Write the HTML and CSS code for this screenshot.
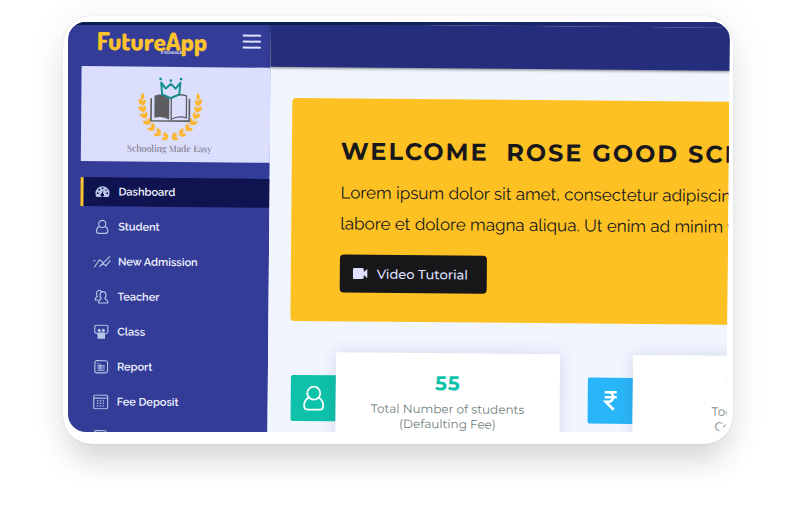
FILE: index.html
```html
<!DOCTYPE html>
<html lang="en">
<head>
<meta charset="utf-8">
<title>FutureApp</title>
<link rel="stylesheet" href="styles.css">
</head>
<body>
<div class="frame">
  <div class="screen">
    <div class="app">
      <aside class="sidebar">
        <div class="brand">
          <a class="brand-name" href="#">FutureApp<small>E SCHOOLS</small></a>
          <button class="menu" type="button" aria-label="Toggle menu"><i></i><i></i><i></i></button>
        </div>
        <div class="school">
          <svg class="emblem" viewBox="0 0 200 196" aria-hidden="true">
            <defs>
              <path id="leaf" d="M0 0C-7-5-7-14 0-21C7-14 7-5 0 0Z"/>
              <g id="branch" fill="#fdb62f">
                <path d="M13 66Q12 160 92 186" fill="none" stroke="#fdb62f" stroke-width="2"/>
                <use href="#leaf" transform="translate(16 72)"/>
                <use href="#leaf" transform="translate(14 88) rotate(-24)"/>
                <use href="#leaf" transform="translate(15 90) rotate(26)"/>
                <use href="#leaf" transform="translate(17 108) rotate(-38)"/>
                <use href="#leaf" transform="translate(18 110) rotate(18)"/>
                <use href="#leaf" transform="translate(24 128) rotate(-50)"/>
                <use href="#leaf" transform="translate(25 129) rotate(8)"/>
                <use href="#leaf" transform="translate(35 147) rotate(-62)"/>
                <use href="#leaf" transform="translate(37 147) rotate(-4)"/>
                <use href="#leaf" transform="translate(51 164) rotate(-76)"/>
                <use href="#leaf" transform="translate(52 162) rotate(-20)"/>
                <use href="#leaf" transform="translate(71 178) rotate(-90)"/>
                <use href="#leaf" transform="translate(72 175) rotate(-36)"/>
                <use href="#leaf" transform="translate(95 188) rotate(-98)"/>
                <use href="#leaf" transform="translate(95 184) rotate(-52)"/>
              </g>
            </defs>
            <use href="#branch"/>
            <use href="#branch" transform="translate(200 0) scale(-1 1)"/>
            <path d="M42 68V136H158V68" fill="none" stroke="#5d5d61" stroke-width="5"/>
            <path d="M52 60Q76 50 97 67V132Q76 120 52 127Z" fill="#5d5d61"/>
            <path d="M149 60Q124 50 103 67V131Q124 119 149 126Z" fill="#dcdefe" stroke="#5d5d61" stroke-width="4"/>
            <path d="M72 20L75 56L101 67L127 56L130 20L116 38L101 24L86 38Z" fill="none" stroke="#138f8c" stroke-width="6" stroke-linejoin="round"/>
            <g fill="#138f8c"><circle cx="70" cy="9" r="4"/><circle cx="101" cy="14" r="4"/><circle cx="132" cy="9" r="4"/></g>
          </svg>
          <span class="motto">Schooling Made Easy</span>
        </div>
        <nav class="nav">
          <a class="active" href="#">
            <svg viewBox="0 0 16 16"><path fill="currentColor" d="M8 2A7.500 7.500 0 0 0 .5 9.500c0 1.700.5 3 1.200 4h12.600c.7-1 1.200-2.300 1.200-4A7.500 7.500 0 0 0 8 2Z"/><g fill="#0f1450"><circle cx="3" cy="9.500" r="1"/><circle cx="4.500" cy="5.800" r="1"/><circle cx="8" cy="4.300" r="1"/><circle cx="13" cy="9.500" r="1"/><circle cx="11.800" cy="6" r=".8"/><path d="M8.800 6l-.3 3.800a1.800 1.800 0 1 1-1.400 0Z"/></g></svg>
            <span>Dashboard</span></a>
          <a href="#">
            <svg viewBox="0 0 16 16" class="line"><circle cx="8" cy="5" r="3.800"/><path d="M5 7.500C3 8.500 2 10.500 2 12.500c0 1.500.8 2.500 2.200 2.500h7.600c1.400 0 2.200-1 2.200-2.500 0-2-1-4-3-5"/></svg>
            <span>Student</span></a>
          <a href="#">
            <svg viewBox="0 0 18 15" class="line"><path d="M1.500 13L6.500 5.500L10.500 8.500L17 2M6.500 12.500L10 9L13 11.500L17.500 6M.5 6.500h2"/></svg>
            <span>New Admission</span></a>
          <a href="#">
            <svg viewBox="0 0 16 16" class="line"><path d="M5 14.500c-.5-2 .5-3.500 2.500-4.500C5.500 7 6 2.500 9.500 2.500S13.500 7 11.500 10c2 1 3.500 2.500 3 4.500ZM8 2.800C6.500.2 2.500.8 2.500 4.500c0 1.500.5 2.500 1 3C2 8.500 1 9.500 1.200 11.500H4.500"/></svg>
            <span>Teacher</span></a>
          <a href="#">
            <svg viewBox="0 0 16 16" class="line"><path d="M3.500 9.500H2.500A1.500 1.500 0 0 1 1 8V2.500A1.500 1.500 0 0 1 2.500 1h11A1.500 1.500 0 0 1 15 2.500V8a1.500 1.500 0 0 1-1.500 1.500h-1"/><g fill="currentColor" stroke="none"><circle cx="5.800" cy="6.500" r="1.700"/><circle cx="10.200" cy="6.500" r="1.700"/><path d="M3 9.500q5-2 10 0l-1 2V15.500H4V11.500Z"/></g></svg>
            <span>Class</span></a>
          <a href="#">
            <svg viewBox="0 0 16 16" class="line"><rect x="1.500" y="1.500" width="13.500" height="13" rx="2"/><path d="M4 4.500h1.500M4 7h8M4 9.300h8M4 11.700h8M7 5v6"/></svg>
            <span>Report</span></a>
          <a href="#">
            <svg viewBox="0 0 16 16" class="line"><rect x=".6" y=".8" width="14.800" height="14.600" rx="1.500"/><path d="M1 4.200h14"/><path stroke-dasharray="1.500 1.500" d="M4 7h8.500M4 9.700h8.500M4 12.400h8.500"/></svg>
            <span>Fee Deposit</span></a>
          <a href="#">
            <svg viewBox="0 0 16 16" class="line"><rect x="2" y="1.500" width="12" height="12" rx="1"/><path d="M2 5h12"/></svg>
            <span>Attendance</span></a>
        </nav>
      </aside>
      <div class="content">
        <header class="topbar"></header>
        <main class="main">
          <section class="banner">
            <h1>WELCOME&nbsp; ROSE GOOD SCHOOL</h1>
            <p>Lorem ipsum dolor sit amet, consectetur adipiscing elit<br>labore et dolore magna aliqua. Ut enim ad minim veniam</p>
            <button class="video" type="button">
              <svg viewBox="0 0 16 12" aria-hidden="true"><path fill="currentColor" d="M1.500.5h8A1.500 1.500 0 0 1 11 2v2.500L14.500 1.300V10.700L11 7.500V10a1.500 1.500 0 0 1-1.500 1.500h-8A1.500 1.500 0 0 1 0 10V2A1.500 1.500 0 0 1 1.500.5Z"/></svg>
              Video Tutorial</button>
          </section>
          <section class="stats">
            <article class="stat">
              <div class="tile green"><svg viewBox="0 0 24 26" aria-hidden="true"><g fill="none" stroke="#fff" stroke-width="1.800"><circle cx="12" cy="8" r="6.500"/><path d="M7 12.500C4 14 2.500 17 2.500 20.500c0 2.500 1.300 4 3.500 4h12c2.200 0 3.500-1.500 3.500-4 0-3.500-1.500-6.500-4.500-8"/></g></svg></div>
              <div class="card"><strong>55</strong><span>Total Number of students<br>(Defaulting Fee)</span></div>
            </article>
            <article class="stat">
              <div class="tile blue"><svg viewBox="0 0 24 26" aria-hidden="true"><path d="M6 4.500h12M6 9.500h12M6 4.500h3.500c6.500 0 6.500 9.500 0 9.500H7L15 22" fill="none" stroke="#fff" stroke-width="2.600"/></svg></div>
              <div class="card sky"><strong>150</strong><span>Today Fees<br>Collection</span></div>
            </article>
          </section>
        </main>
      </div>
    </div>
  </div>
</div>
</body>
</html>
```
FILE: styles.css
```css
* { box-sizing: border-box; }
body {
  margin: 0;
  height: 100vh;
  padding: 16px 75px 79px 63px;
  background: #fff;
  font-family: Raleway, Lato, sans-serif;
  overflow: hidden;
}
.frame {
  height: 100%;
  padding: 6px 3px 12px 5px;
  border-radius: 28px;
  background: #fff;
  box-shadow: 0 24px 30px -8px rgba(40, 45, 55, .17), 0 2px 40px rgba(40, 45, 55, .07), 0 0 1px rgba(40, 45, 55, .3);
}
.screen {
  position: relative;
  height: 100%;
  overflow: hidden;
  border-radius: 18px;
  background: linear-gradient(#252e7c 12px, #fff 12px);
}
.screen::after {
  content: "";
  position: absolute;
  inset: 0 0 auto;
  height: 3px;
  background: linear-gradient(90deg, #08204a 35%, #252e7c);
}
.app {
  display: flex;
  height: 105%;
  overflow: hidden;
  transform: rotate(.5deg);
  transform-origin: 0 0;
}
.sidebar {
  flex: 0 0 203px;
  padding-left: 14px;
  background: #333d98;
}
.brand {
  display: flex;
  align-items: center;
  justify-content: space-between;
  height: 44px;
  padding: 0 10px 8px 15px;
}
.brand-name {
  position: relative;
  color: #fec22d;
  font: 800 25px/30px Dosis, Nunito, Roboto, sans-serif;
  text-decoration: none;
}
.brand-name small {
  position: absolute;
  left: 64px;
  top: 24px;
  color: #dfe2ff;
  font: 700 4px/6px Roboto, sans-serif;
}
.menu {
  display: grid;
  gap: 4px;
  width: 18px;
  padding: 0;
  border: 0;
  background: none;
}
.menu i { height: 2px; background: #dfe2ff; }
.school {
  display: flex;
  flex-direction: column;
  align-items: center;
  height: 95px;
  padding: 9px 12px 0 0;
  background: #dcdefe;
}
.emblem { width: 66px; height: 65px; }
.motto {
  color: #6d6d78;
  font: 9px/14px "Playfair Display", "Liberation Serif", serif;
}
.nav {
  display: grid;
  gap: 6px;
  padding-top: 16px;
}
.nav a {
  display: flex;
  align-items: center;
  gap: 7px;
  height: 29px;
  padding-left: 10px;
  border-left: 3px solid transparent;
  color: #f1f2ff;
  font: 600 11px/16px Raleway, Lato, sans-serif;
  text-decoration: none;
}
.nav .active { border-color: #fec22d; background: #0f1450; }
.nav svg { width: 18px; height: 15px; color: #b5c5e6; }
.nav .line { fill: none; stroke: currentColor; stroke-width: 1.2; }
.content {
  flex: 1;
  min-width: 0;
  background: #f1f5ff;
}
.topbar {
  height: 43px;
  background: #252e7c;
  box-shadow: 0 1px 3px rgba(0, 0, 0, .5);
}
.main { padding: 31px 0 0 22px; }
.banner {
  padding: 38px 0 29px 49px;
  border-radius: 4px 0 0 4px;
  background: #fec124;
  color: #17171c;
  white-space: nowrap;
}
h1 {
  margin: 0;
  font: 700 24px/30px Montserrat, Inter, sans-serif;
  letter-spacing: 2px;
}
.banner p {
  margin: 11px 0 15px;
  font-size: 17px;
  line-height: 31px;
}
.video {
  display: flex;
  align-items: center;
  gap: 8px;
  height: 38px;
  padding: 0 19px 0 13px;
  border: 0;
  border-radius: 4px;
  background: #17171a;
  color: #dfe0ff;
  font: 500 13px/16px Montserrat, Inter, sans-serif;
}
.video svg { width: 16px; height: 12px; }
.stats {
  display: flex;
  gap: 28px;
  padding: 31px 0 0 1px;
}
.stat { display: flex; flex: none; }
.tile {
  display: grid;
  place-items: center;
  width: 45px;
  height: 46px;
  margin-top: 23px;
  border-radius: 2px 0 0 2px;
}
.tile svg { width: 24px; height: 26px; }
.green { background: #0ec2a9; }
.blue { background: #29b6f8; }
.card {
  width: 224px;
  height: 130px;
  padding-top: 18px;
  background: #fff;
  box-shadow: 0 0 16px rgba(60, 70, 120, .16);
  color: #6f8180;
  font: 12px/15px Montserrat, Inter, sans-serif;
  text-align: center;
}
.card strong {
  display: block;
  margin-bottom: 6px;
  color: #0ec2a9;
  font-size: 20px;
  line-height: 24px;
  letter-spacing: 1px;
}
.sky strong { color: #29b6f8; }
```
